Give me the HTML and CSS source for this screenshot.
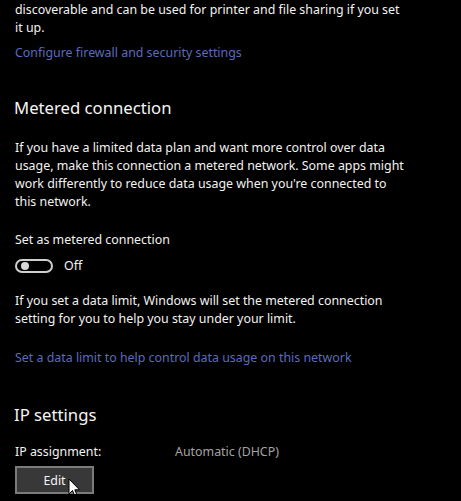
FILE: index.html
```html
<!DOCTYPE html>
<html>
<head>
<meta charset="utf-8">
<link rel="stylesheet" href="styles.css">
</head>
<body>
<div class="page">
  <p class="text">discoverable and can be used for printer and file sharing if you set it up.</p>
  <a class="link first-link">Configure firewall and security settings</a>

  <h2 class="heading">Metered connection</h2>
  <p class="text para">If you have a limited data plan and want more control over data usage, make this connection a metered network. Some apps might work differently to reduce data usage when you're connected to this network.</p>
  <div class="text label">Set as metered connection</div>
  <div class="toggle-row">
    <span class="toggle"><span class="knob"></span></span>
    <span class="text toggle-state">Off</span>
  </div>
  <p class="text para2">If you set a data limit, Windows will set the metered connection setting for you to help you stay under your limit.</p>
  <a class="link second-link">Set a data limit to help control data usage on this network</a>

  <h2 class="heading heading2">IP settings</h2>
  <div class="ip-row">
    <span class="text ip-label">IP assignment:</span>
    <span class="ip-value">Automatic (DHCP)</span>
  </div>
  <div class="button-wrap">
    <button class="edit-btn">Edit</button>
    <svg class="cursor" width="13" height="20" viewBox="0 0 13 20"><path d="M1 1 L1 16 L4.5 12.5 L7 18.5 L9.2 17.5 L6.8 11.8 L11.5 11.8 Z" fill="#fff" stroke="#000" stroke-width="1" stroke-linejoin="round"/></svg>
  </div>
</div>
</body>
</html>
```
FILE: styles.css
```css
html, body {
  margin: 0;
  padding: 0;
  background: #000;
}
body {
  font-family: "Noto Sans", "Open Sans", sans-serif;
  color: #f2f2f2;
  font-size: 12.4px;
  line-height: 18px;
}
.page {
  padding: 1px 0 0 15px;
  width: 393px;
  display: flex;
  flex-direction: column;
  align-items: flex-start;
}
.text {
  margin: 0;
}
.link {
  color: #5a6bbf;
  margin-top: 7px;
}
.heading {
  margin: 33px 0 0 -1px;
  font-size: 16.7px;
  font-weight: 400;
  line-height: 26px;
  color: #f5f5f5;
}
.para {
  margin-top: 18px;
}
.label {
  margin-top: 20px;
}
.toggle-row {
  margin-top: 8px;
  display: flex;
  align-items: center;
  gap: 11px;
}
.toggle {
  box-sizing: border-box;
  width: 38px;
  height: 14px;
  border: 2px solid #cfcfcf;
  border-radius: 7px;
  display: flex;
  align-items: center;
  padding-left: 4px;
}
.knob {
  width: 8px;
  height: 8px;
  border-radius: 50%;
  background: #d8d8d8;
}
.para2 {
  margin-top: 17px;
}
.second-link {
  margin-top: 21px;
}
.heading2 {
  margin-top: 35px;
}
.ip-row {
  margin-top: 15px;
  display: flex;
}
.ip-label {
  width: 160px;
}
.ip-value {
  color: #a3a3a3;
}
.button-wrap {
  position: relative;
  margin-top: 5px;
}
.edit-btn {
  box-sizing: border-box;
  width: 79px;
  height: 28px;
  background: #383838;
  border: 2px solid #7b7b7b;
  color: #f5f5f5;
  font-family: "Noto Sans", "Open Sans", sans-serif;
  font-size: 12.4px;
  padding: 0;
}
.cursor {
  position: absolute;
  left: 53px;
  top: 12px;
}
```
